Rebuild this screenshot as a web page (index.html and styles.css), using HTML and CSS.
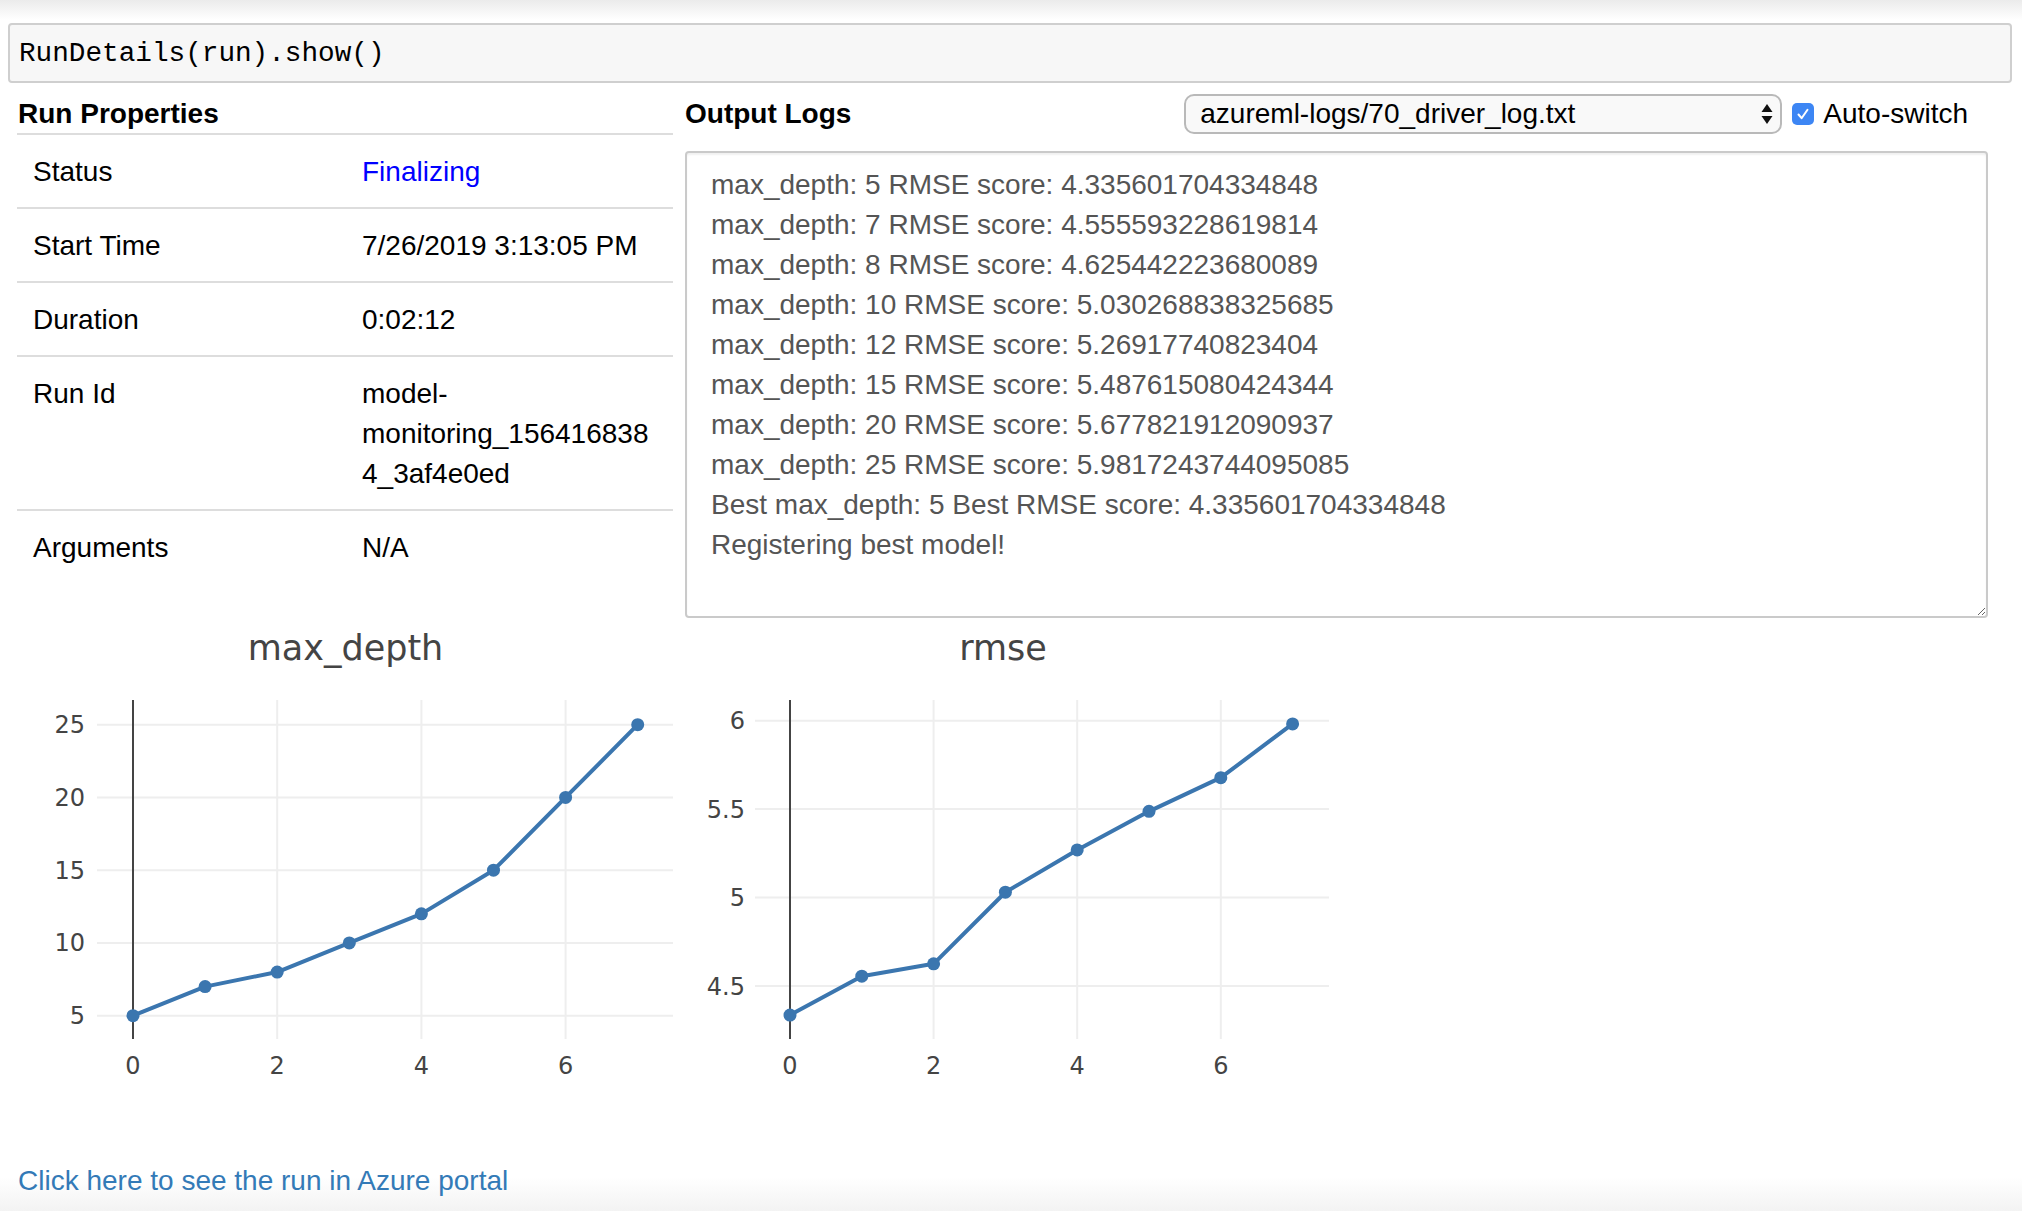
FILE: index.html
```html
<!DOCTYPE html>
<html lang="en">
<head>
<meta charset="utf-8">
<title>RunDetails</title>
<link rel="stylesheet" href="styles.css">
</head>
<body>
<div class="code-cell">RunDetails(run).show()</div>
<div class="output">
  <div class="columns">
    <div class="props">
      <div class="props-title">Run Properties</div>
      <table class="props-table">
        <tr><td class="label">Status</td><td class="value status">Finalizing</td></tr>
        <tr><td class="label">Start Time</td><td class="value">7/26/2019 3:13:05 PM</td></tr>
        <tr><td class="label">Duration</td><td class="value">0:02:12</td></tr>
        <tr><td class="label">Run Id</td><td class="value">model-monitoring_1564168384_3af4e0ed</td></tr>
        <tr><td class="label">Arguments</td><td class="value">N/A</td></tr>
      </table>
    </div>
    <div class="logs">
      <div class="logs-header">
        <div class="logs-title">Output Logs</div>
        <div class="select">
          <span class="select-text">azureml-logs/70_driver_log.txt</span>
          <svg class="select-arrows" width="12" height="24" viewBox="0 0 12 24"><polygon points="0.5,10 6,2 11.5,10" fill="#111"/><polygon points="0.5,14 6,22 11.5,14" fill="#111"/></svg>
        </div>
        <svg class="checkbox" width="22" height="22" viewBox="0 0 22 22"><rect x="0" y="0" width="22" height="22" rx="5" fill="#3d86f4"/><path d="M6.5 11.5 L9.6 15.2 L15.5 6.8" fill="none" stroke="#fff" stroke-width="2" stroke-linecap="round" stroke-linejoin="round"/></svg>
        <span class="check-label">Auto-switch</span>
      </div>
      <div class="logbox">
        <div>max_depth: 5 RMSE score: 4.335601704334848</div>
        <div>max_depth: 7 RMSE score: 4.555593228619814</div>
        <div>max_depth: 8 RMSE score: 4.625442223680089</div>
        <div>max_depth: 10 RMSE score: 5.030268838325685</div>
        <div>max_depth: 12 RMSE score: 5.26917740823404</div>
        <div>max_depth: 15 RMSE score: 5.487615080424344</div>
        <div>max_depth: 20 RMSE score: 5.677821912090937</div>
        <div>max_depth: 25 RMSE score: 5.9817243744095085</div>
        <div>Best max_depth: 5 Best RMSE score: 4.335601704334848</div>
        <div>Registering best model!</div>
      </div>
    </div>
  </div>
  <div class="charts">
    <svg class="chart" width="656" height="470" viewBox="0 0 656 470">
      <g class="grid">
        <line x1="80" y1="104.7" x2="656" y2="104.7"/>
        <line x1="80" y1="177.45" x2="656" y2="177.45"/>
        <line x1="80" y1="250.2" x2="656" y2="250.2"/>
        <line x1="80" y1="322.95" x2="656" y2="322.95"/>
        <line x1="80" y1="395.7" x2="656" y2="395.7"/>
        <line x1="260.2" y1="80" x2="260.2" y2="419"/>
        <line x1="404.4" y1="80" x2="404.4" y2="419"/>
        <line x1="548.6" y1="80" x2="548.6" y2="419"/>
      </g>
      <line class="zeroline" x1="116" y1="80" x2="116" y2="419"/>
      <polyline class="trace" points="116,395.7 188.1,366.6 260.2,352.05 332.3,322.95 404.4,293.85 476.5,250.2 548.6,177.45 620.7,104.7"/>
      <g class="markers">
        <circle cx="116" cy="395.7" r="6.5"/><circle cx="188.1" cy="366.6" r="6.5"/><circle cx="260.2" cy="352.05" r="6.5"/><circle cx="332.3" cy="322.95" r="6.5"/><circle cx="404.4" cy="293.85" r="6.5"/><circle cx="476.5" cy="250.2" r="6.5"/><circle cx="548.6" cy="177.45" r="6.5"/><circle cx="620.7" cy="104.7" r="6.5"/>
      </g>
      <g class="ytick">
        <text x="68" y="113.2">25</text>
        <text x="68" y="185.95">20</text>
        <text x="68" y="258.7">15</text>
        <text x="68" y="331.45">10</text>
        <text x="68" y="404.2">5</text>
      </g>
      <g class="xtick">
        <text x="116" y="454">0</text>
        <text x="260.2" y="454">2</text>
        <text x="404.4" y="454">4</text>
        <text x="548.6" y="454">6</text>
      </g>
      <text class="chart-title" x="328.5" y="40">max_depth</text>
    </svg>
    <svg class="chart" width="656" height="470" viewBox="0 0 656 470">
      <g class="grid">
        <line x1="80" y1="100.7" x2="654" y2="100.7"/>
        <line x1="80" y1="189.1" x2="654" y2="189.1"/>
        <line x1="80" y1="277.6" x2="654" y2="277.6"/>
        <line x1="80" y1="366" x2="654" y2="366"/>
        <line x1="258.6" y1="80" x2="258.6" y2="419"/>
        <line x1="402.2" y1="80" x2="402.2" y2="419"/>
        <line x1="545.8" y1="80" x2="545.8" y2="419"/>
      </g>
      <line class="zeroline" x1="115" y1="80" x2="115" y2="419"/>
      <polyline class="trace" points="115,395.08 186.8,356.17 258.6,343.81 330.4,272.21 402.2,229.96 474,191.32 545.8,157.68 617.6,103.93"/>
      <g class="markers">
        <circle cx="115" cy="395.08" r="6.5"/><circle cx="186.8" cy="356.17" r="6.5"/><circle cx="258.6" cy="343.81" r="6.5"/><circle cx="330.4" cy="272.21" r="6.5"/><circle cx="402.2" cy="229.96" r="6.5"/><circle cx="474" cy="191.32" r="6.5"/><circle cx="545.8" cy="157.68" r="6.5"/><circle cx="617.6" cy="103.93" r="6.5"/>
      </g>
      <g class="ytick">
        <text x="70" y="109.2">6</text>
        <text x="70" y="197.6">5.5</text>
        <text x="70" y="286.1">5</text>
        <text x="70" y="374.5">4.5</text>
      </g>
      <g class="xtick">
        <text x="115" y="454">0</text>
        <text x="258.6" y="454">2</text>
        <text x="402.2" y="454">4</text>
        <text x="545.8" y="454">6</text>
      </g>
      <text class="chart-title" x="328" y="40">rmse</text>
    </svg>
  </div>
  <a class="portal-link" href="#">Click here to see the run in Azure portal</a>
</div>
</body>
</html>
```
FILE: styles.css
```css
html {
  height: 100%;
  background: linear-gradient(to bottom, #ebebeb 0px, #ffffff 20px, #ffffff calc(100% - 34px), #f3f3f3 100%);
}

body {
  margin: 0;
  font-family: "Liberation Sans", Arial, Helvetica, sans-serif;
  font-size: 28px;
  line-height: 40px;
  color: #000;
}

.code-cell {
  margin: 23px 10px 0 8px;
  padding: 9px 9px 7px;
  border: 2px solid #cfcfcf;
  border-radius: 4px;
  background: #f7f7f7;
  font-family: "Liberation Mono", "Courier New", monospace;
  font-size: 27.7px;
  line-height: 40px;
  color: #000;
}

.output {
  padding: 10px 0 0 17px;
}

.columns {
  display: flex;
  gap: 12px;
  align-items: flex-start;
}

.props {
  width: 656px;
  flex: none;
}

.props-title {
  font-weight: bold;
  padding: 1px 0 0 1px;
  line-height: 39px;
  border-bottom: 2px solid #dddddd;
}

.props-table {
  width: 656px;
  border-collapse: collapse;
  table-layout: fixed;
}

.props-table td {
  padding: 17px 16px 15px;
  vertical-align: top;
}

.props-table tr + tr td {
  border-top: 2px solid #dddddd;
}

.props-table .label {
  width: 297px;
}

.props-table .value {
  overflow-wrap: break-word;
  word-wrap: break-word;
}

.status {
  color: #0000ff;
}

.logs {
  width: 1303px;
  flex: none;
  display: flex;
  flex-direction: column;
}

.logs-header {
  display: flex;
  align-items: center;
  height: 42px;
}

.logs-title {
  font-weight: bold;
  flex: 1;
}

.select {
  width: 598px;
  height: 40px;
  box-sizing: border-box;
  border: 2px solid #b9b9b9;
  border-radius: 10px;
  background: #f9f9f9;
  display: flex;
  align-items: center;
  padding: 0 7px 0 14px;
  line-height: 36px;
}

.select-text {
  flex: 1;
  white-space: nowrap;
}

.select-arrows {
  display: block;
  flex: none;
}

.checkbox {
  display: block;
  flex: none;
  margin-left: 10px;
}

.check-label {
  margin-left: 9px;
  margin-right: 20px;
  white-space: nowrap;
}

.logbox {
  margin-top: 16px;
  height: 467px;
  box-sizing: border-box;
  border: 2px solid #cacaca;
  border-radius: 4px;
  padding: 12px 24px;
  color: #555555;
  background: #fff;
  box-shadow: inset 0 2px 2px rgba(0, 0, 0, 0.06);
  overflow: auto;
  resize: vertical;
}

.charts {
  display: flex;
  gap: 2px;
  margin-top: 2px;
}

.chart {
  display: block;
  flex: none;
}

.grid line {
  stroke: #eeeeee;
  stroke-width: 2;
}

.zeroline {
  stroke: #444444;
  stroke-width: 2;
}

.trace {
  fill: none;
  stroke: #3b76af;
  stroke-width: 4;
  stroke-linejoin: round;
}

.markers circle {
  fill: #3b76af;
}

.ytick text,
.xtick text {
  font-family: "DejaVu Sans", Verdana, sans-serif;
  font-size: 24px;
  fill: #444444;
}

.ytick text {
  text-anchor: end;
}

.xtick text {
  text-anchor: middle;
}

.chart-title {
  font-family: "DejaVu Sans", Verdana, sans-serif;
  font-size: 35px;
  fill: #444444;
  text-anchor: middle;
}

.portal-link {
  display: block;
  margin-top: 71px;
  padding-left: 1px;
  color: #337ab7;
  text-decoration: none;
  width: max-content;
}
```
